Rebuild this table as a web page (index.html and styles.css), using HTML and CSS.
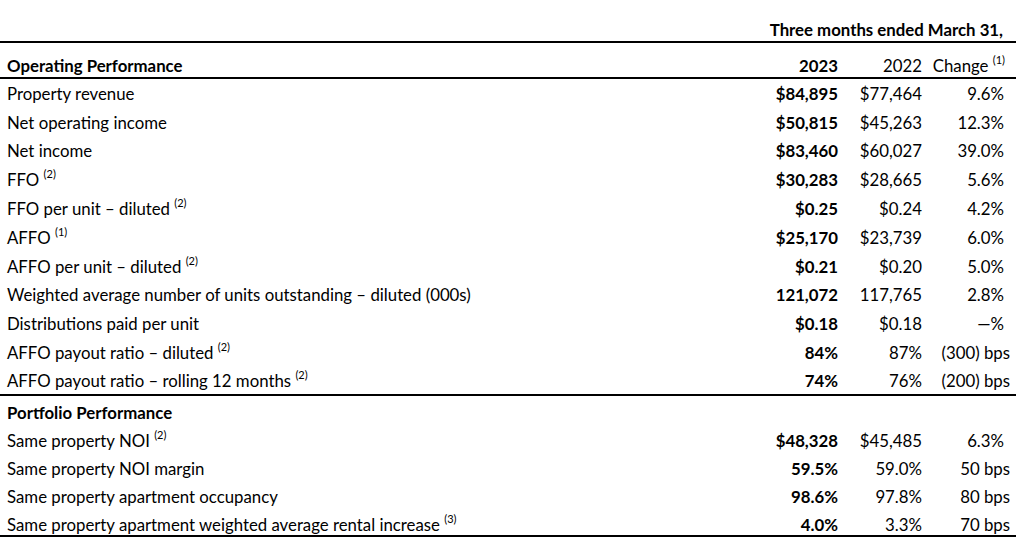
FILE: index.html
```html
<!DOCTYPE html>
<html lang="en">
<head>
<meta charset="utf-8">
<title>Operating Performance</title>
<link rel="stylesheet" href="styles.css">
</head>
<body>
<table class="perf">
  <colgroup>
    <col class="c-label">
    <col class="c-cur">
    <col class="c-prev">
    <col class="c-chg">
  </colgroup>
  <thead>
    <tr class="period">
      <th></th>
      <th colspan="3" class="period-title">Three months ended March 31,</th>
    </tr>
    <tr class="cols">
      <th class="label">Operating Performance</th>
      <th class="cur">2023</th>
      <th class="prev">2022</th>
      <th class="chg head-chg">Change <sup>(1)</sup></th>
    </tr>
  </thead>
  <tbody class="section ops">
    <tr><td class="label">Property revenue</td><td class="cur">$84,895</td><td class="prev">$77,464</td><td class="chg pct">9.6%</td></tr>
    <tr><td class="label">Net operating income</td><td class="cur">$50,815</td><td class="prev">$45,263</td><td class="chg pct">12.3%</td></tr>
    <tr><td class="label">Net income</td><td class="cur">$83,460</td><td class="prev">$60,027</td><td class="chg pct">39.0%</td></tr>
    <tr><td class="label">FFO <sup>(2)</sup></td><td class="cur">$30,283</td><td class="prev">$28,665</td><td class="chg pct">5.6%</td></tr>
    <tr><td class="label">FFO per unit – diluted <sup>(2)</sup></td><td class="cur">$0.25</td><td class="prev">$0.24</td><td class="chg pct">4.2%</td></tr>
    <tr><td class="label">AFFO <sup>(1)</sup></td><td class="cur">$25,170</td><td class="prev">$23,739</td><td class="chg pct">6.0%</td></tr>
    <tr><td class="label">AFFO per unit – diluted <sup>(2)</sup></td><td class="cur">$0.21</td><td class="prev">$0.20</td><td class="chg pct">5.0%</td></tr>
    <tr><td class="label">Weighted average number of units outstanding – diluted (000s)</td><td class="cur">121,072</td><td class="prev">117,765</td><td class="chg pct">2.8%</td></tr>
    <tr><td class="label">Distributions paid per unit</td><td class="cur">$0.18</td><td class="prev">$0.18</td><td class="chg pct">—%</td></tr>
    <tr><td class="label">AFFO payout ratio – diluted <sup>(2)</sup></td><td class="cur">84%</td><td class="prev">87%</td><td class="chg bps">(300) bps</td></tr>
    <tr><td class="label">AFFO payout ratio – rolling 12 months <sup>(2)</sup></td><td class="cur">74%</td><td class="prev">76%</td><td class="chg bps">(200) bps</td></tr>
  </tbody>
  <tbody class="section portfolio">
    <tr><th class="label">Portfolio Performance</th><td class="cur"></td><td class="prev"></td><td class="chg"></td></tr>
    <tr><td class="label">Same property NOI <sup>(2)</sup></td><td class="cur">$48,328</td><td class="prev">$45,485</td><td class="chg pct">6.3%</td></tr>
    <tr><td class="label">Same property NOI margin</td><td class="cur">59.5%</td><td class="prev">59.0%</td><td class="chg bps">50 bps</td></tr>
    <tr><td class="label">Same property apartment occupancy</td><td class="cur">98.6%</td><td class="prev">97.8%</td><td class="chg bps">80 bps</td></tr>
    <tr><td class="label">Same property apartment weighted average rental increase <sup>(3)</sup></td><td class="cur">4.0%</td><td class="prev">3.3%</td><td class="chg bps">70 bps</td></tr>
  </tbody>
</table>
</body>
</html>
```

FILE: styles.css
```css
html, body {
  margin: 0;
  padding: 0;
  background: #fff;
}

body {
  font-family: Lato, "Liberation Sans", sans-serif;
  color: #000;
  font-size: 16.8px;
}

.perf {
  border-collapse: collapse;
  width: 1016px;
  table-layout: fixed;
}

.c-label { width: 760px; }
.c-cur { width: 80px; }
.c-prev { width: 84px; }
.c-chg { width: 92px; }

.perf th,
.perf td {
  padding: 0;
  white-space: nowrap;
  line-height: 20px;
  font-weight: normal;
}

.perf th { font-weight: 700; }

.label {
  text-align: left;
  padding-left: 7px !important;
}

.cur {
  text-align: right;
  padding-right: 2px !important;
  font-weight: 700 !important;
}

.prev {
  text-align: right;
  padding-right: 2px !important;
}

.chg {
  text-align: right;
}

.pct { padding-right: 12px !important; }
.bps { padding-right: 6px !important; }

.period th {
  height: 40px;
  vertical-align: bottom;
  padding-bottom: 1px;
  border-bottom: 2px solid #000;
}

.period-title {
  text-align: right;
  padding-right: 13px !important;
}

.cols th {
  height: 33px;
  vertical-align: bottom;
  padding-bottom: 1px;
  border-bottom: 2px solid #000;
}

.cols .prev { font-weight: normal; }
.cols .head-chg {
  font-weight: normal;
  padding-right: 11px !important;
}

.section td,
.section th {
  vertical-align: middle;
}

.ops tr { height: 28.8px; }
.ops td { padding-top: 3px; }

.portfolio tr { height: 28.3px; }
.portfolio td,
.portfolio th { padding-top: 7px; }

.section tr:last-child td,
.section tr:last-child th {
  border-bottom: 2px solid #000;
}

sup {
  font-size: 11px;
  line-height: 0;
  vertical-align: 8px;
}
```
